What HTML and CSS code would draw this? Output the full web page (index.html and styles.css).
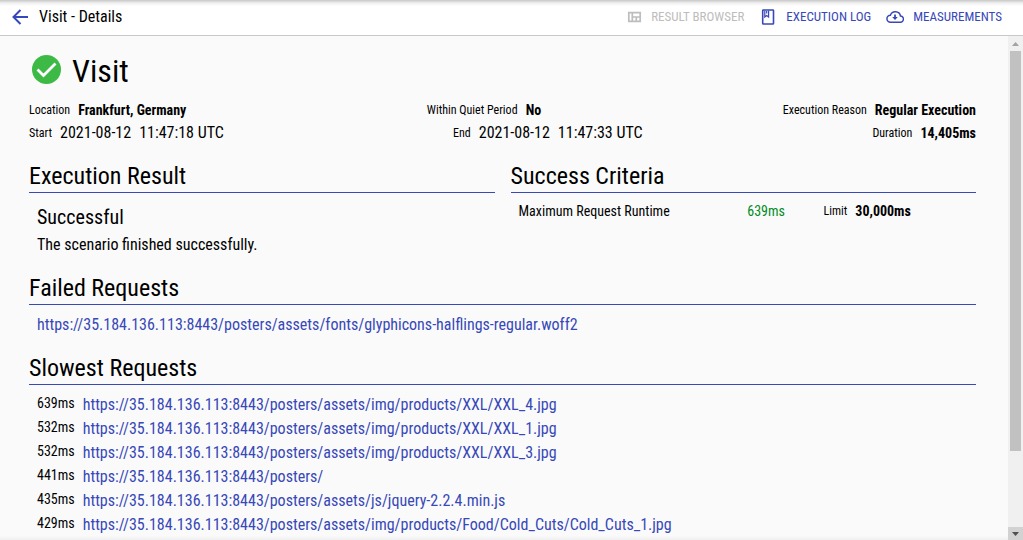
FILE: index.html
```html
<!DOCTYPE html>
<html lang="en">
<head>
<meta charset="utf-8">
<title>Visit - Details</title>
<link rel="stylesheet" href="styles.css">
</head>
<body>
<header class="toolbar">
  <button class="back" type="button" aria-label="Back">
    <svg width="16" height="16" viewBox="0 0 16 16" fill="none" stroke="currentColor" stroke-width="2"><path d="M16 8H2M8.500 1L1.500 8l7 7"/></svg>
  </button>
  <h1 class="toolbar-title">Visit - Details</h1>
  <nav class="actions">
    <button class="action" type="button" disabled>
      <svg width="18" height="18" viewBox="0 0 18 18" fill="none" stroke="currentColor" stroke-width="1.700"><path d="M4.800 4.600h11.400v8.800H4.800zM8.300 4.600v8.800M8.300 9h8M12.300 9v4.400"/></svg>
      <span>RESULT BROWSER</span>
    </button>
    <button class="action" type="button">
      <svg width="18" height="18" viewBox="0 0 18 18" fill="none" stroke="currentColor"><rect stroke-width="1.600" x="3.700" y="2" width="10.800" height="14" rx=".6"/><path stroke-width="1.200" d="M5.800 2.500V9L7.700 7.600 9.600 9V2.500M7.700 3v2.500"/></svg>
      <span>EXECUTION LOG</span>
    </button>
    <button class="action" type="button">
      <svg width="18" height="18" viewBox="0 0 18 18" fill="none" stroke="currentColor" stroke-width="1.500"><path d="M4.500 14.200h9.700a3.100 3.100 0 0 0 .3-6.200A5.300 5.300 0 0 0 4.400 7.200a3.500 3.500 0 0 0 .1 7z"/><path stroke-width="1.800" d="M9 6.600v3"/><path fill="currentColor" stroke="none" d="M6.200 9h5.600L9 12z"/></svg>
      <span>MEASUREMENTS</span>
    </button>
  </nav>
</header>
<div class="viewport">
  <main class="content">
    <div class="headline">
      <svg width="29" height="29" viewBox="0 0 29 29"><circle cx="14.500" cy="14.500" r="14.500" fill="#3cba45"/><path d="M5.500 14.500l6 6L23.500 8.500" fill="none" stroke="#fff" stroke-width="2.800"/></svg>
      <h2 class="page-title">Visit</h2>
    </div>
    <div class="facts">
      <dl class="fact-group">
        <div class="fact"><dt>Location</dt><dd>Frankfurt, Germany</dd></div>
        <div class="fact"><dt>Start</dt><dd class="time"><span>2021-08-12</span><span>11:47:18 UTC</span></dd></div>
      </dl>
      <dl class="fact-group center">
        <div class="fact"><dt>Within Quiet Period</dt><dd>No</dd></div>
        <div class="fact"><dt>End</dt><dd class="time"><span>2021-08-12</span><span>11:47:33 UTC</span></dd></div>
      </dl>
      <dl class="fact-group right">
        <div class="fact"><dt>Execution Reason</dt><dd>Regular Execution</dd></div>
        <div class="fact"><dt>Duration</dt><dd>14,405ms</dd></div>
      </dl>
    </div>
    <div class="columns">
      <section>
        <h3 class="section-title">Execution Result</h3>
        <div class="result">
          <h4 class="result-state">Successful</h4>
          <p class="result-text">The scenario finished successfully.</p>
        </div>
      </section>
      <section>
        <h3 class="section-title">Success Criteria</h3>
        <div class="criteria">
          <span>Maximum Request Runtime</span>
          <span class="ok">639ms</span>
          <span class="fact"><small class="limit-label">Limit</small><b>30,000ms</b></span>
        </div>
      </section>
    </div>
    <section>
      <h3 class="section-title">Failed Requests</h3>
      <ul class="requests">
        <li><a href="#">https://35.184.136.113:8443/posters/assets/fonts/glyphicons-halflings-regular.woff2</a></li>
      </ul>
    </section>
    <section>
      <h3 class="section-title">Slowest Requests</h3>
      <ul class="requests">
        <li><span class="duration">639ms</span><a href="#">https://35.184.136.113:8443/posters/assets/img/products/XXL/XXL_4.jpg</a></li>
        <li><span class="duration">532ms</span><a href="#">https://35.184.136.113:8443/posters/assets/img/products/XXL/XXL_1.jpg</a></li>
        <li><span class="duration">532ms</span><a href="#">https://35.184.136.113:8443/posters/assets/img/products/XXL/XXL_3.jpg</a></li>
        <li><span class="duration">441ms</span><a href="#">https://35.184.136.113:8443/posters/</a></li>
        <li><span class="duration">435ms</span><a href="#">https://35.184.136.113:8443/posters/assets/js/jquery-2.2.4.min.js</a></li>
        <li><span class="duration">429ms</span><a href="#">https://35.184.136.113:8443/posters/assets/img/products/Food/Cold_Cuts/Cold_Cuts_1.jpg</a></li>
      </ul>
    </section>
  </main>
  <div class="scrollbar" aria-hidden="true">
    <svg class="arrow-up" width="15" height="15" viewBox="0 0 15 15"><path d="M4 10h7L7.500 6z"/></svg>
    <div class="track"><div class="thumb"></div></div>
    <svg class="arrow-down" width="15" height="13" viewBox="0 0 15 13"><path d="M4 5h7L7.500 9z"/></svg>
  </div>
</div>
</body>
</html>
```
FILE: styles.css
```css
* { box-sizing: border-box; }

body {
  margin: 0;
  height: 100vh;
  display: flex;
  flex-direction: column;
  overflow: hidden;
  background: #fafafa;
  color: #000;
  font: 16px/24px "Roboto Condensed", Roboto, "Liberation Sans", sans-serif;
}

h1, h2, h3, h4, p, dl, dd, ul { margin: 0; padding: 0; font-weight: 400; }
ul { list-style: none; }
svg { display: block; flex: none; }

button {
  padding: 0;
  border: 0;
  background: none;
  color: #3748b8;
  font: inherit;
}

a { color: #3748b8; text-decoration: none; }

.toolbar {
  flex: none;
  height: 36px;
  display: flex;
  align-items: center;
  padding: 0 21px 2px 12px;
  border-bottom: 1px solid #c8c8c8;
  background: linear-gradient(#c8c8c8, #efefef 3px, #fff 6px);
}

.toolbar-title { flex: 1; margin-left: 11px; font-size: 16px; }

.actions { display: flex; gap: 15px; }

.action {
  display: flex;
  align-items: center;
  gap: 9px;
  font-size: 13px;
}

.action:disabled { color: #bdbdbd; }

.viewport { flex: 1; min-height: 0; display: flex; }

.content {
  flex: 1;
  min-width: 0;
  overflow: hidden;
  padding: 12px 32px 0 29px;
  background: linear-gradient(to top, #f0f0f0, #fafafa 4px);
}

.headline {
  display: flex;
  align-items: center;
  gap: 11px;
  height: 42px;
  padding: 0 3px;
}

.page-title { padding-top: 4px; font-size: 32px; line-height: 42px; }

.facts { display: grid; grid-template-columns: 42% 29% 29%; padding-top: 8px; }
.fact-group { display: flex; flex-direction: column; }
.fact-group.right { align-items: flex-end; }
.fact-group.center dt { width: 91px; }
.fact-group.center .fact:nth-child(2) dt { width: 44px; text-align: right; }
.fact { display: flex; align-items: center; gap: 8px; height: 23px; white-space: nowrap; }
.fact dt, .limit-label { font-size: 12px; }
.fact dd, .fact b { font-size: 14px; font-weight: 700; }
.fact .time { display: flex; gap: 8px; font-size: 16px; font-weight: 400; }

.columns {
  display: grid;
  grid-template-columns: 1fr 1fr;
  gap: 16px;
  padding: 16px 0 16px;
}

.section-title {
  height: 33px;
  border-bottom: 1px solid #3748b8;
  font-size: 24px;
  line-height: 32px;
}

.result { padding: 8px 8px 0; }
.result-state { font-size: 20px; line-height: 32px; }
.result-text { line-height: 23px; }

.criteria {
  display: grid;
  grid-template-columns: 3fr 1fr 2fr;
  align-items: center;
  padding: 6px 0 0 8px;
  line-height: 22px;
  font-size: 14px;
}

.ok { color: #008c1e; }

.requests { padding: 8px 8px 15px; }
.requests li { display: flex; gap: 8px; height: 24px; white-space: nowrap; }
.duration { font-size: 14px; line-height: 21px; }

.scrollbar {
  flex: none;
  width: 15px;
  display: flex;
  flex-direction: column;
  background: #f0f0f0;
}

.track { flex: 1; padding: 0 2px; }
.thumb { height: 84%; background: #c1c1c1; }
.arrow-up { fill: #a3a3a3; }
.arrow-down { fill: #505050; background: #d2d2d2; }
```
